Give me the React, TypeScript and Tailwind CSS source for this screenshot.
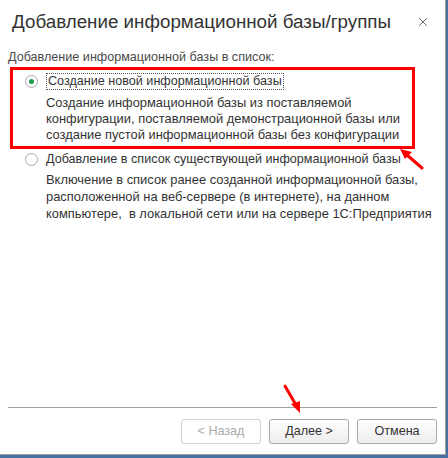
import { X } from 'lucide-react'

const font = { fontFamily: '"Liberation Sans", Arial, sans-serif' }

function Radio({ checked }: { checked?: boolean }) {
  return (
    <span className="flex h-[13px] w-[13px] shrink-0 items-center justify-center rounded-full border border-[#a8a8a8] bg-white">
      {checked && <span className="h-[5px] w-[5px] rounded-full bg-[#1b9a4a]" />}
    </span>
  )
}

function Btn({ children, disabled }: { children: string; disabled?: boolean }) {
  return (
    <button
      className={
        disabled
          ? 'h-[25px] w-[80px] rounded-[3px] border border-[#d0d0d0] bg-white text-[12.6px] text-[#a9a9a9]'
          : 'h-[25px] w-[80px] rounded-[3px] border border-[#a9a9a9] bg-gradient-to-b from-white to-[#ededed] text-[12.6px] text-[#333]'
      }
    >
      {children}
    </button>
  )
}

export default function App() {
  return (
    <div className="relative flex h-[458px] w-[448px] bg-[#46709f]" style={font}>
      <div className="flex h-[455px] w-[446px] flex-col border-r border-b border-[#a0a0a0] bg-white">
        {/* заголовок */}
        <div className="flex h-[42px] items-center justify-between pl-[12px] pr-[15px] pt-[2px]">
          <span className="text-[18.8px] text-[#333]">Добавление информационной базы/группы</span>
          <X className="h-[14px] w-[14px] text-[#555]" strokeWidth={1.5} />
        </div>

        <div className="mt-[7px] pl-[8px] text-[12.6px] leading-[16px] text-[#4a4a4a]">
          Добавление информационной базы в список:
        </div>

        <div className="mt-[2px] ml-[10px] mr-[30px] border-[3px] border-[#ff0000] pb-[3px] pt-[3px]">
          <div className="flex items-center gap-[8px] pl-[12px]">
            <Radio checked />
            <span className="border border-dotted border-[#555] px-[1px] text-[12.6px] leading-[15px] text-[#333]">
              Создание новой информационной базы
            </span>
          </div>
          <div className="mt-[5px] pl-[33px] text-[12.9px] leading-[16px] text-[#333]">
            Создание информационной базы из поставляемой
            <br />
            конфигурации, поставляемой демонстрационной базы или
            <br />
            создание пустой информационной базы без конфигурации
          </div>
        </div>

        <div className="mt-[2px] flex w-[412px] items-center gap-[8px] overflow-hidden whitespace-nowrap pl-[25px]">
          <Radio />
          <span className="text-[12.6px] leading-[17px] text-[#333]">
            Добавление в список существующей информационной базы
          </span>
        </div>
        <div className="mt-[3px] pl-[46px] text-[12.9px] leading-[17px] text-[#333]">
          Включение в список ранее созданной информационной базы,
          <br />
          расположенной на веб-сервере (в интернете), на данном
          <br />
          компьютере,&nbsp; в локальной сети или на сервере 1С:Предприятия
        </div>

        <div className="flex-1" />

        <div className="mx-[8px] border-t border-[#a0a0a0]" />
        <div className="flex justify-end gap-[8px] pb-[10px] pr-[8px] pt-[11px]">
          <Btn disabled>{'< Назад'}</Btn>
          <Btn>{'Далее >'}</Btn>
          <Btn>Отмена</Btn>
        </div>
      </div>

      {/* стрелки */}
      <svg className="pointer-events-none absolute left-0 top-0" width="448" height="458">
        <line x1="422" y1="168" x2="407" y2="155" stroke="#f00" strokeWidth="3" strokeLinecap="round" />
        <polygon points="400,149 412,152 405,159" fill="#f00" />
        <line x1="285" y1="386" x2="296" y2="405" stroke="#f00" strokeWidth="3" strokeLinecap="round" />
        <polygon points="300,413 291,404 300,401" fill="#f00" />
      </svg>
    </div>
  )
}
